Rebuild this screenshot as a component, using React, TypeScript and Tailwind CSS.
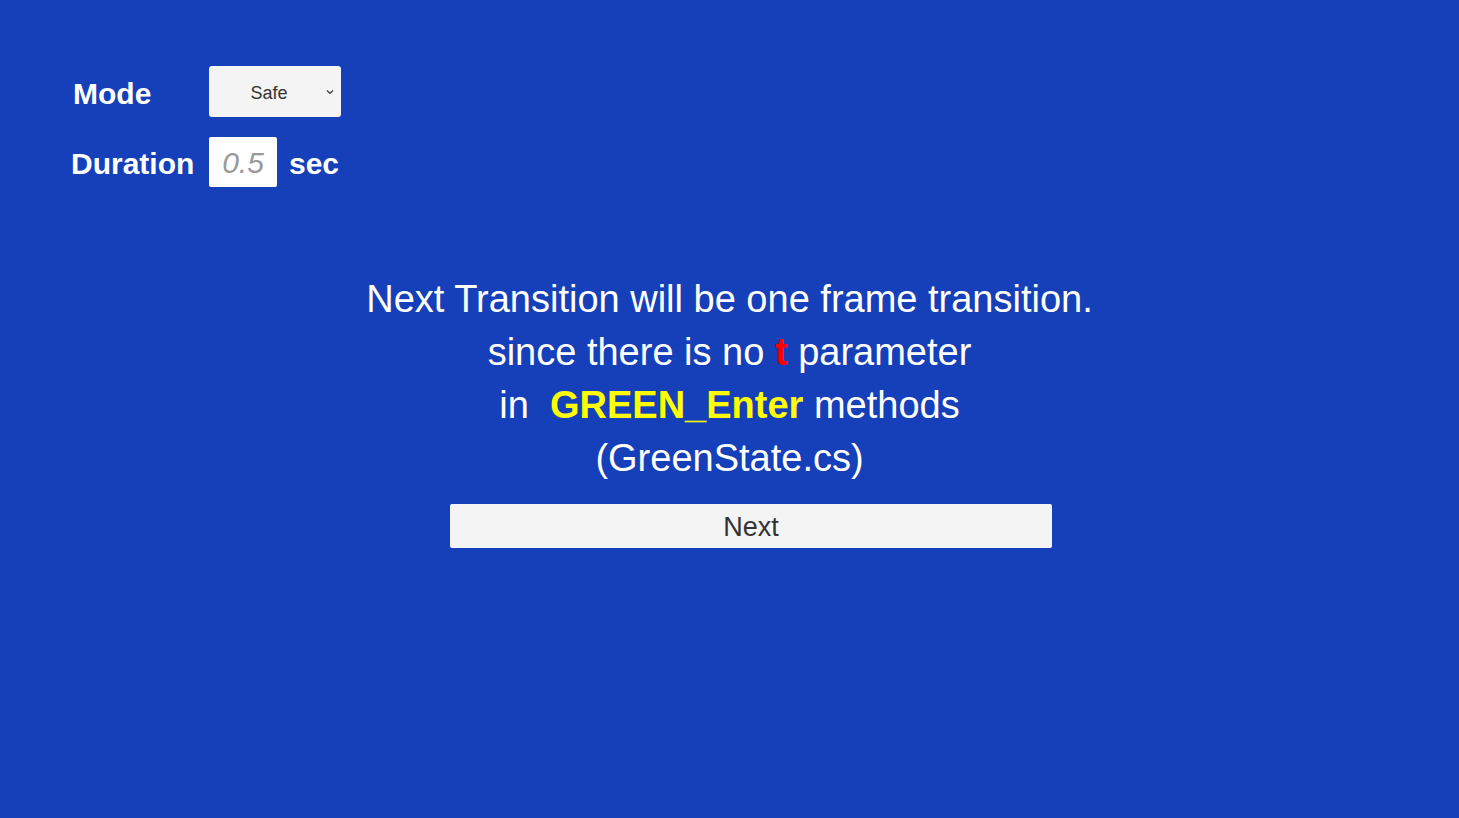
import { useState } from "react";

const App = () => {
  const [mode, setMode] = useState("Safe");

  return (
    <div
      className="w-[1459px] h-[818px] bg-[#1640b9] overflow-hidden text-white"
      style={{ fontFamily: '"Liberation Sans", Arial, sans-serif' }}
    >
      {/* settings panel */}
      <div className="pt-[66px] pl-[71px] flex flex-col gap-[20px]">
        <div className="flex items-center">
          <div className="w-[138px] pl-[2px] pt-[3px] text-[30px] font-bold">Mode</div>
          <div className="relative w-[132px] h-[51px] rounded-[3px] bg-[#f4f4f4] text-[#333]">
            <select
              value={mode}
              onChange={(e) => setMode(e.target.value)}
              className="appearance-none w-full h-full bg-transparent text-center text-[18px] pt-[3px] pr-[12px] outline-none"
            >
              <option>Safe</option>
              <option>Fast</option>
            </select>
            <svg
              className="absolute right-[7px] top-[23px] pointer-events-none"
              width="8"
              height="6"
              viewBox="0 0 8 6"
            >
              <path d="M1 1.5 L4 4.5 L7 1.5" stroke="#333" strokeWidth="1.2" fill="none" />
            </svg>
          </div>
        </div>
        <div className="flex items-center">
          <div className="w-[138px] pt-[2px] text-[30px] font-bold">Duration</div>
          <input
            placeholder="0.5"
            className="w-[68px] h-[50px] rounded-[2px] bg-white text-center text-[30px] pt-[2px] italic text-[#333] placeholder:text-[#9a9a9a] outline-none"
          />
          <div className="ml-[12px] pt-[2px] text-[30px] font-bold">sec</div>
        </div>
      </div>

      {/* message */}
      <div className="mt-[86px] flex flex-col items-center text-[38px] leading-[53px]">
        <div>Next Transition will be one frame transition.</div>
        <div>
          since there is no <span className="font-bold text-[#ff0000]">t</span> parameter
        </div>
        <div className="whitespace-pre">
          in  <span className="font-bold text-[#ffff00]">GREEN_Enter</span> methods
        </div>
        <div>(GreenState.cs)</div>
      </div>

      <div className="mt-[19px] pl-[450px]">
        <button className="w-[602px] h-[44px] rounded-[2px] bg-[#f4f4f4] text-[#333] text-[27px] pt-[2px]">
          Next
        </button>
      </div>
    </div>
  );
};

export default App;
